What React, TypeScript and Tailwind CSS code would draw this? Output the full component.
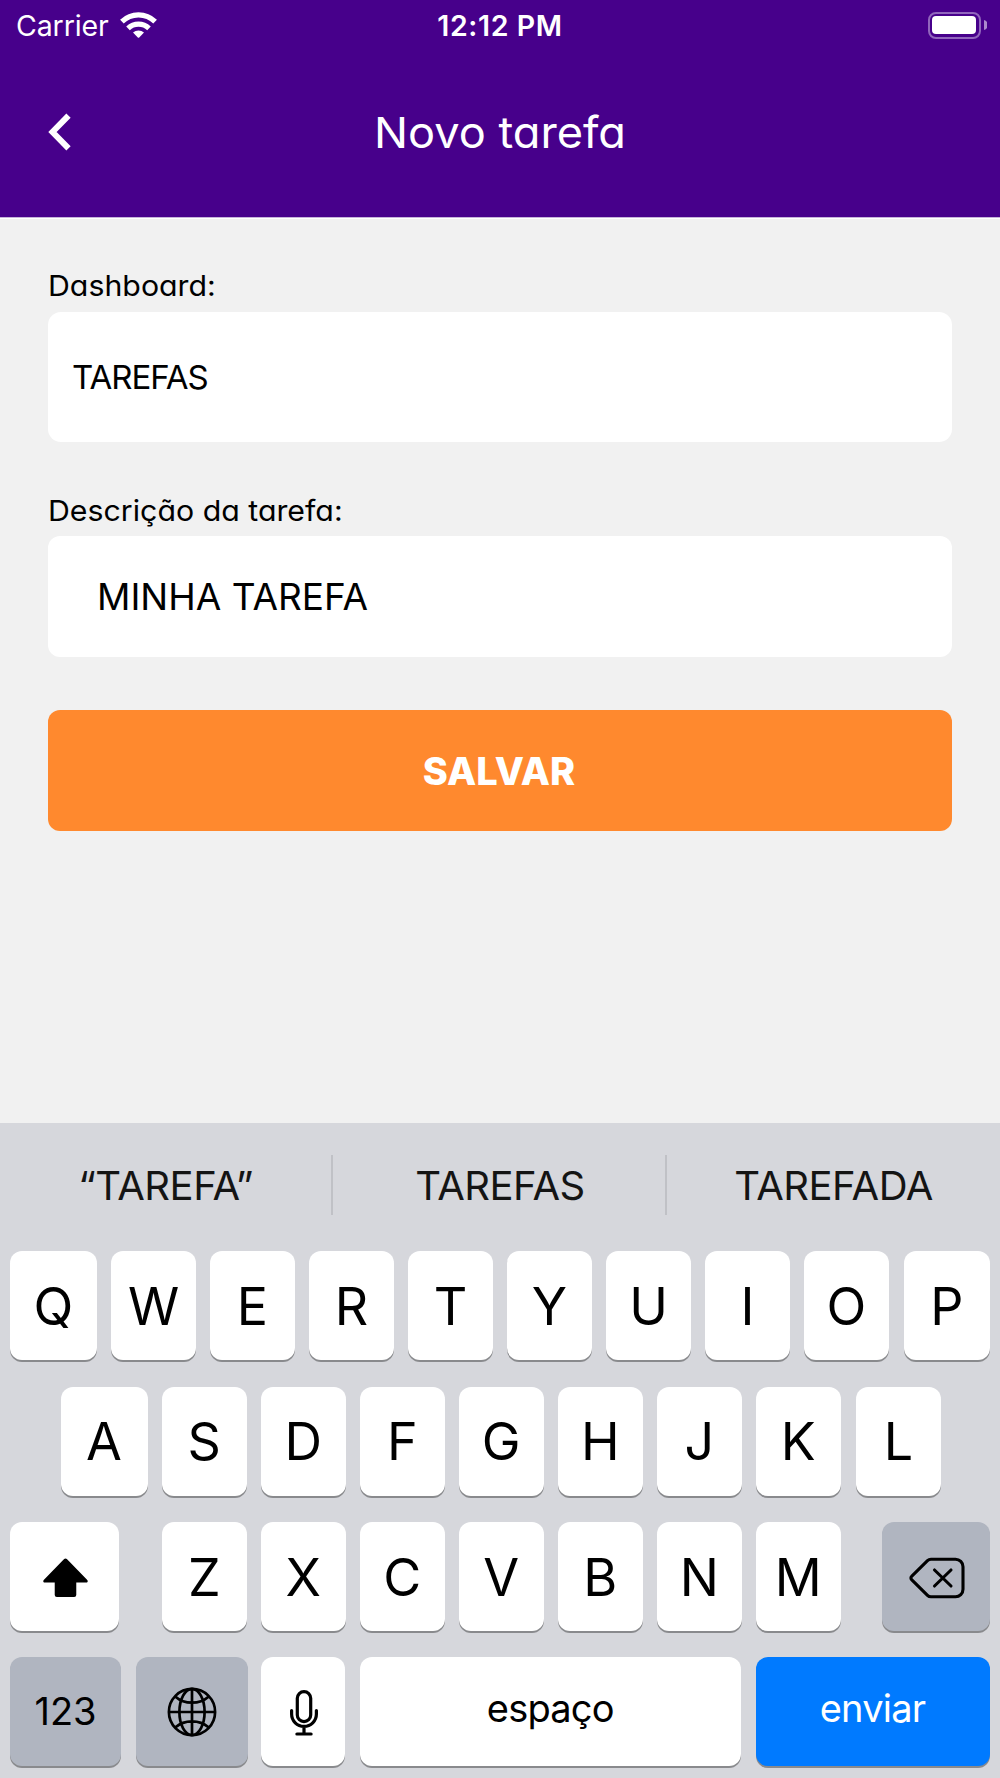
import React from "react";

const letterKey = "w-[84.5px] bg-white pt-[2px] text-[52px]";

function Key({ className, children }: { className: string; children: React.ReactNode }) {
  return (
    <button
      type="button"
      className={`flex h-[109px] shrink-0 items-center justify-center rounded-[12px] leading-none shadow-[0_2px_0_#898a8d] ${className}`}
    >
      {children}
    </button>
  );
}

function WifiIcon() {
  return (
    <svg width="37" height="28" viewBox="0 0 37 28" fill="none" stroke="white">
      <path d="M1.900 10.600a23.700 23.700 0 0 1 33.200 0" strokeWidth="5.200" />
      <path d="M8 17.300a15.200 15.200 0 0 1 21 0" strokeWidth="5.200" />
      <path d="M13 21.600a8.200 8.200 0 0 1 11 0L19.200 26.500a1 1 0 0 1-1.400 0Z" fill="white" stroke="none" />
    </svg>
  );
}

function Battery() {
  return (
    <div className="flex items-center gap-[3px]">
      <div className="h-[27px] w-[53px] rounded-[8px] border-2 border-[#9166bc] p-[2.5px]">
        <div className="h-full w-full rounded-[4px] bg-white" />
      </div>
      <svg width="3" height="10" viewBox="0 0 3 10">
        <path d="M0 0a5.200 5.200 0 0 1 0 10Z" fill="#ac8acd" />
      </svg>
    </div>
  );
}

function ShiftIcon() {
  return (
    <svg width="47" height="42" viewBox="0 0 48 42" className="mt-[2px] ml-[3px]">
      <path
        d="M22.600 1.700a2 2 0 0 1 2.800 0L46 22.700c1.400 1.400.7 3-1.200 3H35v12.600a2.200 2.200 0 0 1-2.200 2.200H15.200a2.200 2.200 0 0 1-2.200-2.200V25.700H3.200c-1.900 0-2.600-1.600-1.200-3Z"
        fill="black"
      />
    </svg>
  );
}

function DeleteIcon() {
  return (
    <svg width="56" height="42" viewBox="0 0 56 42" className="mt-[2px] ml-[2px]" fill="none" stroke="black" strokeWidth="3.100" strokeLinecap="round" strokeLinejoin="round">
      <path d="M22 2.200H46.500a7.500 7.500 0 0 1 7.500 7.500V32.300a7.500 7.500 0 0 1-7.500 7.500H22a5 5 0 0 1-3.500-1.500L2.600 22.600a2.200 2.200 0 0 1 0-3.200L18.500 3.700A5 5 0 0 1 22 2.200Z" />
      <path d="M25.500 13l16.500 16M42 13l-16.500 16" />
    </svg>
  );
}

function GlobeIcon() {
  return (
    <svg width="50" height="50" viewBox="0 0 50 50" fill="none" stroke="black" strokeWidth="2.700">
      <circle cx="25" cy="25" r="23.100" />
      <ellipse cx="25" cy="25" rx="12.600" ry="23.100" />
      <path d="M25 1.800v46.400M1.800 25h46.400M8.500 9.700c9 8 24 8 33 0M8.500 40.300c9-8 24-8 33 0" />
    </svg>
  );
}

function MicIcon() {
  return (
    <svg width="28" height="46" viewBox="0 0 28 46" className="mt-[2px] ml-[2px]" fill="none" stroke="black" strokeWidth="3.200" strokeLinecap="round">
      <rect x="7.300" y="1.600" width="13.400" height="30" rx="6.700" />
      <path d="M1.600 20.500v3.500a12.400 12.400 0 0 0 24.800 0v-3.500M14 36.500v7M6.900 44h14.200" />
    </svg>
  );
}

export default function App() {
  return (
    <div className="flex h-[1778px] w-[1000px] flex-col overflow-hidden bg-[#f1f1f1] font-['Inter',sans-serif] text-black">
      <header className="h-[218px] border-b border-[#c6b3da] bg-[#47008b] text-white">
        <div className="grid h-[50px] grid-cols-3 items-center pr-[13px] pl-[16px]">
          <div className="flex items-center gap-[11px]">
            <span className="pt-[2px] text-[28.5px] leading-none tracking-[-0.1px]">Carrier</span>
            <WifiIcon />
          </div>
          <span className="pt-[2px] pr-[3px] text-center text-[28.5px] leading-none font-semibold tracking-[0.6px]">12:12 PM</span>
          <div className="flex justify-end">
            <Battery />
          </div>
        </div>
        <div className="grid h-[164px] grid-cols-[100px_1fr_100px] items-center">
          <svg width="24" height="38" viewBox="0 0 24 38" className="ml-[48px]" fill="none" stroke="white" strokeWidth="6">
            <path d="M20.500 2.700L4.500 19l16 16.300" />
          </svg>
          <h1 className="scale-x-[1.05] text-center text-[43px] leading-none font-normal [font-feature-settings:'cv11']">Novo tarefa</h1>
        </div>
      </header>

      <main className="flex h-[905px] flex-col border-t border-white px-[48px] pt-[51px]">
        <label className="flex h-[42px] origin-left scale-x-[1.045] items-start text-[29px] leading-[32px] [font-feature-settings:'cv11']">Dashboard:</label>
        <div className="flex h-[130px] items-center rounded-[13px] bg-white pl-[24px] text-[33px] leading-none tracking-[-1px]">TAREFAS</div>
        <label className="mt-[52px] flex h-[42px] origin-left scale-x-[1.045] items-start pt-[1px] text-[29px] leading-[32px] [font-feature-settings:'cv11']">
          Descrição da tarefa:
        </label>
        <div className="flex h-[121px] items-center rounded-[12px] bg-white pl-[49px] text-[37px] leading-none">MINHA TAREFA</div>
        <button type="button" className="mt-[53px] flex h-[121px] items-center justify-center rounded-[12px] bg-[#ff892e] pr-[2px] text-[38px] leading-none font-extrabold text-white">
          SALVAR
        </button>
      </main>

      <section className="flex h-[655px] flex-col bg-[#d6d7dc]">
        <div className="flex h-[128px] items-center text-[40px] leading-none tracking-[-0.5px] text-[#141414]">
          <span className="w-[331px] pb-[2px] text-center">“TAREFA”</span>
          <span className="mt-[-4px] h-[60px] w-[2px] bg-[#c0c1c6]" />
          <span className="w-[332px] pb-[2px] pl-[2px] text-center">TAREFAS</span>
          <span className="mt-[-4px] h-[60px] w-[2px] bg-[#c0c1c6]" />
          <span className="w-[333px] pb-[2px] text-center">TAREFADA</span>
        </div>
        <div className="flex h-[135.5px] gap-[14px] pl-[10px]">
          <Key className="w-[87px] bg-white pt-[2px] text-[52px]">Q</Key>
          {["W", "E", "R", "T", "Y", "U", "I", "O"].map((k) => (
            <Key key={k} className="w-[85px] bg-white pt-[2px] text-[52px]">{k}</Key>
          ))}
          <Key className="ml-[1px] w-[85.5px] bg-white pt-[2px] text-[52px]">P</Key>
        </div>
        <div className="flex h-[135.5px] gap-[14.5px] pl-[60.5px]">
          <Key className="w-[87px] bg-white pt-[2px] text-[52px]">A</Key>
          {["S", "D", "F", "G", "H", "J", "K"].map((k) => (
            <Key key={k} className={letterKey}>{k}</Key>
          ))}
          <Key className="ml-[1px] w-[85px] bg-white pt-[2px] text-[52px]">L</Key>
        </div>
        <div className="flex h-[135px] gap-[14.5px] pl-[10px]">
          <Key className="mr-[29px] w-[108.5px] bg-white"><ShiftIcon /></Key>
          {["Z", "X", "C", "V", "B", "N", "M"].map((k) => (
            <Key key={k} className={letterKey}>{k}</Key>
          ))}
          <Key className="ml-[26.5px] w-[108.5px] bg-[#b0b5c0]"><DeleteIcon /></Key>
        </div>
        <div className="flex gap-[14.5px] pl-[10px]">
          <Key className="w-[111px] bg-[#b0b5c0] pb-[1px] text-[38px]">123</Key>
          <Key className="w-[112px] bg-[#b0b5c0]"><GlobeIcon /></Key>
          <Key className="ml-[-1.5px] w-[84.5px] bg-white"><MicIcon /></Key>
          <Key className="w-[381.5px] bg-white pb-[8px] text-[38px] tracking-[-0.8px]">espaço</Key>
          <Key className="w-[234px] bg-[#007aff] pb-[8px] text-[38px] tracking-[-0.8px] text-white">enviar</Key>
        </div>
      </section>
    </div>
  );
}
